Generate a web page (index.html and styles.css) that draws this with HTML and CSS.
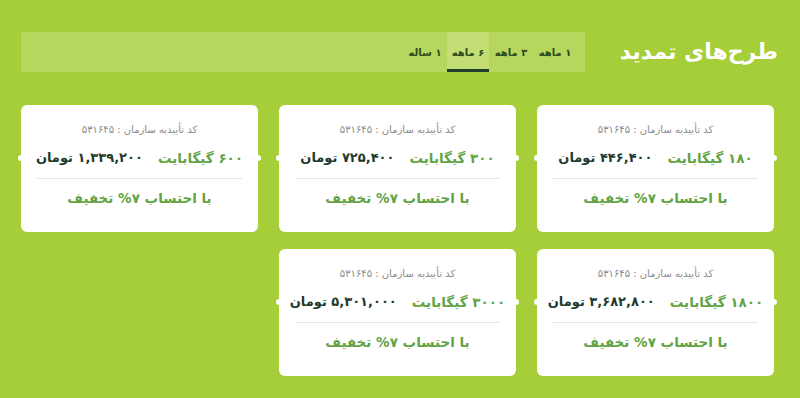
FILE: index.html
```html
<!DOCTYPE html>
<html lang="fa" dir="rtl">
<head>
<meta charset="utf-8">
<link rel="stylesheet" href="styles.css">
</head>
<body>
<div class="page">
  <header class="head">
    <h1 class="title">طرح‌های تمدید</h1>
    <nav class="tabs">
      <span class="tab">۱ ماهه</span>
      <span class="tab">۳ ماهه</span>
      <span class="tab active">۶ ماهه</span>
      <span class="tab">۱ ساله</span>
    </nav>
  </header>
  <main class="grid">
    <div class="card">
      <div class="code">کد تأییدیه سازمان : ۵۳۱۶۴۵</div>
      <div class="price"><span class="gb">۱۸۰ گیگابایت</span><span class="amt">۴۴۶,۴۰۰ تومان</span></div>
      <div class="sep"></div>
      <div class="disc">با احتساب ۷% تخفیف</div>
    </div>
    <div class="card">
      <div class="code">کد تأییدیه سازمان : ۵۳۱۶۴۵</div>
      <div class="price"><span class="gb">۳۰۰ گیگابایت</span><span class="amt">۷۲۵,۴۰۰ تومان</span></div>
      <div class="sep"></div>
      <div class="disc">با احتساب ۷% تخفیف</div>
    </div>
    <div class="card">
      <div class="code">کد تأییدیه سازمان : ۵۳۱۶۴۵</div>
      <div class="price"><span class="gb">۶۰۰ گیگابایت</span><span class="amt">۱,۳۳۹,۲۰۰ تومان</span></div>
      <div class="sep"></div>
      <div class="disc">با احتساب ۷% تخفیف</div>
    </div>
    <div class="card">
      <div class="code">کد تأییدیه سازمان : ۵۳۱۶۴۵</div>
      <div class="price"><span class="gb">۱۸۰۰ گیگابایت</span><span class="amt">۳,۶۸۲,۸۰۰ تومان</span></div>
      <div class="sep"></div>
      <div class="disc">با احتساب ۷% تخفیف</div>
    </div>
    <div class="card">
      <div class="code">کد تأییدیه سازمان : ۵۳۱۶۴۵</div>
      <div class="price"><span class="gb">۳۰۰۰ گیگابایت</span><span class="amt">۵,۳۰۱,۰۰۰ تومان</span></div>
      <div class="sep"></div>
      <div class="disc">با احتساب ۷% تخفیف</div>
    </div>
  </main>
</div>
</body>
</html>
```
FILE: styles.css
```css
html, body {
  margin: 0;
  padding: 0;
}
body {
  background: #a6ce39;
  font-family: "DejaVu Sans", "Noto Sans", sans-serif;
  width: 800px;
  height: 398px;
  overflow: hidden;
}
.page {
  padding: 32px 22px 0 21px;
}
.head {
  display: flex;
  align-items: center;
  height: 40px;
}
.title {
  margin: 0 0 0 43px;
  color: #ffffff;
  font-size: 22px;
  font-weight: bold;
  white-space: nowrap;
  line-height: 40px;
  width: 150px;
  text-align: right;
}
.tabs {
  flex: 1;
  display: flex;
  height: 40px;
  background: #b6d65d;
  padding-right: 8px;
}
.tab {
  display: flex;
  align-items: center;
  justify-content: center;
  width: 44px;
  font-size: 10px;
  font-weight: bold;
  color: #2e4a22;
  white-space: nowrap;
  box-sizing: border-box;
}
.tab.active {
  width: 42px;
  background: #c2de74;
  border-bottom: 3px solid #1f3d28;
  padding-top: 3px;
}
.grid {
  display: grid;
  grid-template-columns: repeat(3, 237px);
  column-gap: 21px;
  row-gap: 17px;
  margin-top: 33px;
  margin-right: 4px;
}
.card {
  position: relative;
  background: #ffffff;
  border-radius: 6px;
  height: 127px;
  padding: 17px 16px 0;
  box-sizing: border-box;
  text-align: center;
}
.card::before, .card::after {
  content: "";
  position: absolute;
  top: 50px;
  width: 6px;
  height: 6px;
  border-radius: 50%;
  background: #ffffff;
}
.card::before { right: -3px; }
.card::after { left: -3px; }
.code {
  font-size: 10px;
  color: #8a8a8a;
  line-height: 16px;
}
.price {
  display: flex;
  justify-content: center;
  gap: 15px;
  margin-top: 9px;
  line-height: 22px;
  font-size: 13px;
  font-weight: bold;
  white-space: nowrap;
}
.gb { color: #62a344; font-size: 13.5px; }
.amt { color: #1d3a2c; }
.sep {
  height: 1px;
  background: #e3e6e3;
  margin-top: 9px;
}
.disc {
  margin-top: 9px;
  font-size: 13.5px;
  font-weight: bold;
  color: #62a344;
  line-height: 20px;
}
```
